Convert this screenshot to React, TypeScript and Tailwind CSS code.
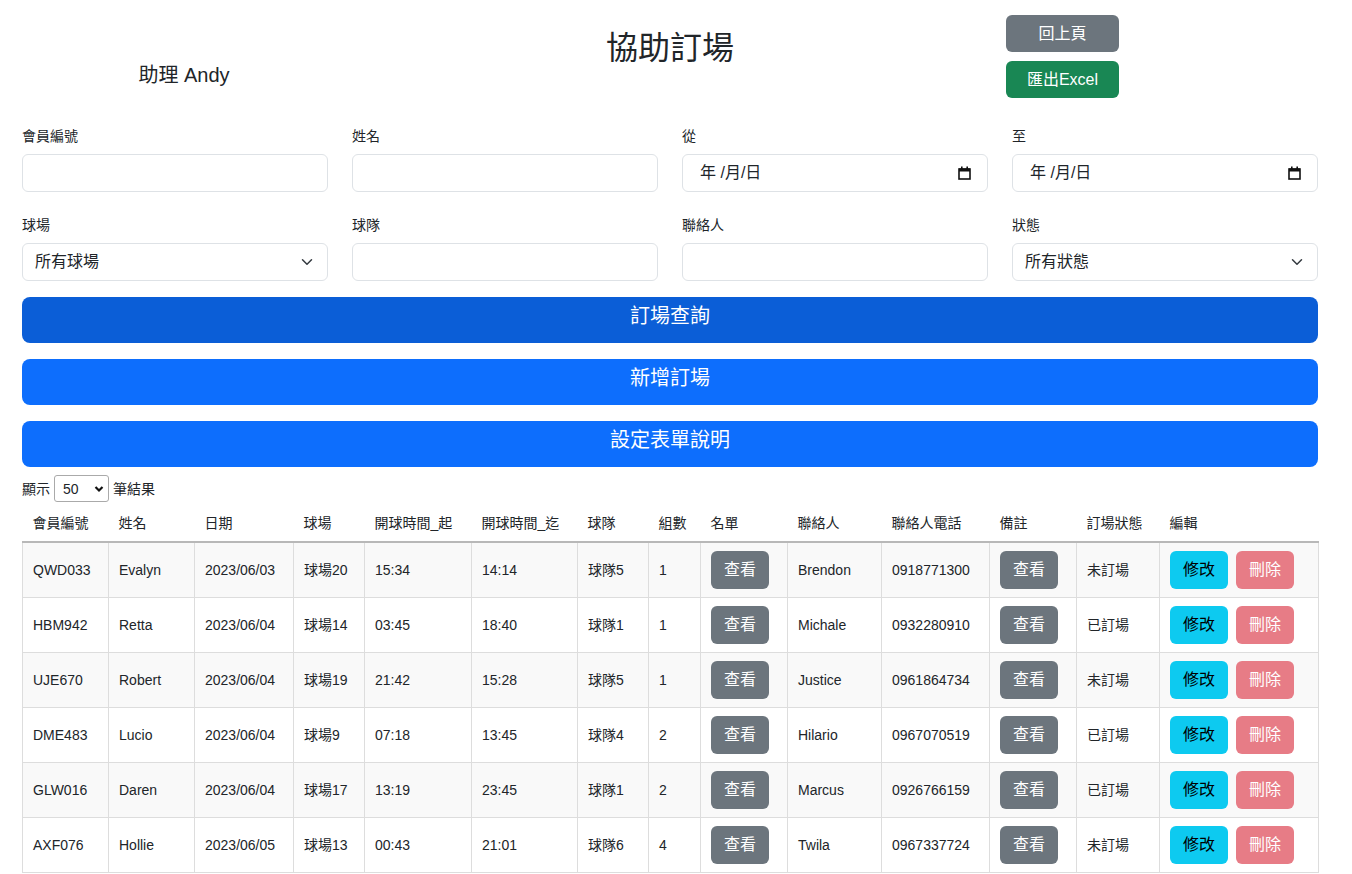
import React from 'react';

type Row = {
  id: string;
  name: string;
  date: string;
  court: string;
  start: string;
  end: string;
  team: string;
  groups: number;
  contact: string;
  phone: string;
  status: string;
};

const rows: Row[] = [
  { id: 'QWD033', name: 'Evalyn', date: '2023/06/03', court: '球場20', start: '15:34', end: '14:14', team: '球隊5', groups: 1, contact: 'Brendon', phone: '0918771300', status: '未訂場' },
  { id: 'HBM942', name: 'Retta', date: '2023/06/04', court: '球場14', start: '03:45', end: '18:40', team: '球隊1', groups: 1, contact: 'Michale', phone: '0932280910', status: '已訂場' },
  { id: 'UJE670', name: 'Robert', date: '2023/06/04', court: '球場19', start: '21:42', end: '15:28', team: '球隊5', groups: 1, contact: 'Justice', phone: '0961864734', status: '未訂場' },
  { id: 'DME483', name: 'Lucio', date: '2023/06/04', court: '球場9', start: '07:18', end: '13:45', team: '球隊4', groups: 2, contact: 'Hilario', phone: '0967070519', status: '已訂場' },
  { id: 'GLW016', name: 'Daren', date: '2023/06/04', court: '球場17', start: '13:19', end: '23:45', team: '球隊1', groups: 2, contact: 'Marcus', phone: '0926766159', status: '已訂場' },
  { id: 'AXF076', name: 'Hollie', date: '2023/06/05', court: '球場13', start: '00:43', end: '21:01', team: '球隊6', groups: 4, contact: 'Twila', phone: '0967337724', status: '未訂場' },
];

const headers = ['會員編號', '姓名', '日期', '球場', '開球時間_起', '開球時間_迄', '球隊', '組數', '名單', '聯絡人', '聯絡人電話', '備註', '訂場狀態', '編輯'];
const widths = ['w-[86px]', 'w-[86px]', 'w-[99px]', 'w-[71px]', 'w-[107px]', 'w-[106px]', 'w-[71px]', 'w-[52px]', 'w-[87px]', 'w-[94px]', 'w-[108px]', 'w-[87px]', 'w-[83px]', 'w-[159px]'];

const Chevron = () => (
  <svg width="16" height="12" viewBox="0 0 16 16" fill="none">
    <path d="m2 5 6 6 6-6" stroke="#343a40" strokeWidth="2" strokeLinecap="round" strokeLinejoin="round" />
  </svg>
);

const CalendarIcon = () => (
  <svg width="13" height="14" viewBox="0 0 13 14">
    <rect x="1" y="3" width="11" height="10" fill="none" stroke="#111" strokeWidth="1.6" />
    <rect x="1" y="2.5" width="11" height="3" fill="#111" />
    <rect x="3" y="0.5" width="1.6" height="3" fill="#111" />
    <rect x="8.4" y="0.5" width="1.6" height="3" fill="#111" />
  </svg>
);

const Field: React.FC<{ label: string; children: React.ReactNode }> = ({ label, children }) => (
  <div>
    <div className="text-sm leading-[21px] mb-[7px] text-[#212529]">{label}</div>
    {children}
  </div>
);

const TextBox = () => (
  <div className="h-[38px] border border-[#dee2e6] rounded-md bg-white" />
);

const DateBox = () => (
  <div className="h-[38px] border border-[#dee2e6] rounded-md bg-white flex items-center justify-between pl-[17px] pr-[16px] text-base text-[#212529]">
    <span>年 /月/日</span>
    <CalendarIcon />
  </div>
);

const SelectBox: React.FC<{ text: string }> = ({ text }) => (
  <div className="h-[38px] border border-[#dee2e6] rounded-md bg-white flex items-center justify-between pl-[12px] pr-[12px] text-base text-[#212529]">
    <span>{text}</span>
    <Chevron />
  </div>
);

const App: React.FC = () => {
  return (
    <div className="min-h-screen bg-white text-[#212529] pl-[22px] pr-[34px] pb-4" style={{ fontFamily: '"Liberation Sans", "Noto Sans CJK TC", sans-serif' }}>
      {/* header */}
      <div className="flex">
        <div className="w-[324px] text-center pt-[63px] text-[20px] leading-[24px]">助理 Andy</div>
        <div className="w-[648px] text-center pt-[29px] text-[32px] leading-[38px]">協助訂場</div>
        <div className="w-[324px] pl-[12px] pt-[15px] flex flex-col gap-[9px]">
          <button className="w-[113px] h-[37px] rounded-md bg-[#6c757d] text-white text-base">回上頁</button>
          <button className="w-[113px] h-[37px] rounded-md bg-[#198754] text-white text-base">匯出Excel</button>
        </div>
      </div>

      {/* filter form */}
      <div className="mt-[28px] grid grid-cols-4 gap-x-6 gap-y-[23px]">
        <Field label="會員編號"><TextBox /></Field>
        <Field label="姓名"><TextBox /></Field>
        <Field label="從"><DateBox /></Field>
        <Field label="至"><DateBox /></Field>
        <Field label="球場"><SelectBox text="所有球場" /></Field>
        <Field label="球隊"><TextBox /></Field>
        <Field label="聯絡人"><TextBox /></Field>
        <Field label="狀態"><SelectBox text="所有狀態" /></Field>
      </div>

      <div className="mt-4 flex flex-col gap-4">
        <button className="h-[46px] w-full rounded-lg bg-[#0b5ed7] text-white text-[20px] pb-[8px]">訂場查詢</button>
        <button className="h-[46px] w-full rounded-lg bg-[#0d6efd] text-white text-[20px] pb-[8px]">新增訂場</button>
        <button className="h-[46px] w-full rounded-lg bg-[#0d6efd] text-white text-[20px] pb-[8px]">設定表單說明</button>
      </div>

      {/* page length */}
      <div className="mt-2 flex items-center gap-1 text-sm">
        <span>顯示</span>
        <div className="w-[55px] h-[27px] border border-[#aaa] rounded-[3px] flex items-center justify-between pl-[8px] pr-[4px] text-sm">
          <span>50</span>
          <svg width="10" height="8" viewBox="0 0 10 8">
            <path d="M1.5 2 5 5.5 8.5 2" fill="none" stroke="#111" strokeWidth="2.2" />
          </svg>
        </div>
        <span>筆結果</span>
      </div>

      {/* table */}
      <table className="mt-[2px] w-full table-fixed border-collapse text-sm">
        <colgroup>
          {widths.map((w, i) => (
            <col key={i} className={w} />
          ))}
        </colgroup>
        <thead>
          <tr>
            {headers.map((h) => (
              <th key={h} className="text-left font-normal px-[10px] h-[38px] border-b-2 border-[#b8b8b8] whitespace-nowrap">
                {h}
              </th>
            ))}
          </tr>
        </thead>
        <tbody>
          {rows.map((r, idx) => (
            <tr key={r.id} className={idx % 2 === 0 ? 'bg-[#f9f9f9]' : 'bg-white'}>
              <td className="border border-[#ddd] px-[10px] h-[55px]">{r.id}</td>
              <td className="border border-[#ddd] px-[10px]">{r.name}</td>
              <td className="border border-[#ddd] px-[10px]">{r.date}</td>
              <td className="border border-[#ddd] px-[10px]">{r.court}</td>
              <td className="border border-[#ddd] px-[10px]">{r.start}</td>
              <td className="border border-[#ddd] px-[10px]">{r.end}</td>
              <td className="border border-[#ddd] px-[10px]">{r.team}</td>
              <td className="border border-[#ddd] px-[10px]">{r.groups}</td>
              <td className="border border-[#ddd] px-[10px]">
                <button className="w-[58px] h-[38px] rounded-md bg-[#6c757d] text-white text-base">查看</button>
              </td>
              <td className="border border-[#ddd] px-[10px]">{r.contact}</td>
              <td className="border border-[#ddd] px-[10px]">{r.phone}</td>
              <td className="border border-[#ddd] px-[10px]">
                <button className="w-[58px] h-[38px] rounded-md bg-[#6c757d] text-white text-base">查看</button>
              </td>
              <td className="border border-[#ddd] px-[10px]">{r.status}</td>
              <td className="border border-[#ddd] px-[10px]">
                <div className="flex gap-2">
                  <button className="w-[58px] h-[38px] rounded-md bg-[#0dcaf0] text-black text-base">修改</button>
                  <button className="w-[58px] h-[38px] rounded-md bg-[#e77c86] text-white text-base">刪除</button>
                </div>
              </td>
            </tr>
          ))}
        </tbody>
      </table>
    </div>
  );
};

export default App;
